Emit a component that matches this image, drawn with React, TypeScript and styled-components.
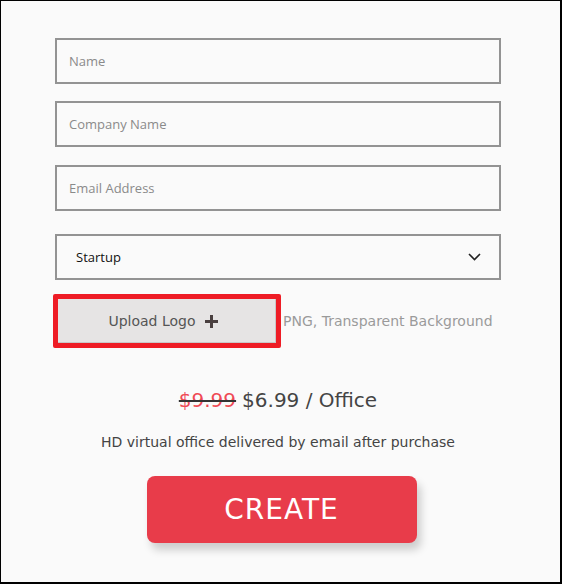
import React from "react";
import styled, { createGlobalStyle } from "styled-components";

const Global = createGlobalStyle`
  body {
    margin: 0;
    background: #fafafa;
    font-family: "Open Sans", "DejaVu Sans", sans-serif;
  }
`;

const Frame = styled.div`
  width: 562px;
  height: 584px;
  box-sizing: border-box;
  border-style: solid;
  border-color: #000;
  border-width: 1px 2px 2px 1px;
  background: #fafafa;
  padding: 37px 0 0 54px;
`;

const Form = styled.form`
  width: 446px;
  display: flex;
  flex-direction: column;
`;

const Field = styled.input<{ $gap?: number }>`
  box-sizing: border-box;
  width: 100%;
  height: 46px;
  margin-bottom: ${(p) => p.$gap ?? 18}px;
  border: 2px solid #939393;
  background: #fafafa;
  padding: 0 12px;
  font-family: "Open Sans", sans-serif;
  font-size: 13px;
  color: #333;
  outline: none;
  &::placeholder {
    color: #8a8a8a;
  }
`;

const SelectBox = styled.div`
  box-sizing: border-box;
  width: 100%;
  height: 46px;
  border: 2px solid #939393;
  background: #fafafa;
  display: flex;
  align-items: center;
  justify-content: space-between;
  padding: 0 18px 0 19px;
  font-family: "Open Sans", sans-serif;
  font-size: 13px;
  color: #111;
`;

const UploadRow = styled.div`
  display: flex;
  align-items: center;
  margin: 14px 0 0 -2px;
`;

const UploadFrame = styled.div`
  box-sizing: border-box;
  width: 228px;
  height: 54px;
  border: 5px solid #ee1c25;
  border-radius: 2px;
  display: flex;
`;

const UploadButton = styled.button`
  flex: 1;
  border: none;
  background: #e6e4e4;
  box-shadow: inset -1px -1px 0 #c9c7c7;
  display: flex;
  align-items: center;
  justify-content: center;
  gap: 9px;
  padding: 0 8px 0 0;
  font-family: "DejaVu Sans", sans-serif;
  font-size: 14px;
  color: #555;
`;

const Hint = styled.span`
  margin-left: 2px;
  font-family: "DejaVu Sans", sans-serif;
  font-size: 14px;
  color: #9a9a9a;
`;

const Price = styled.div`
  margin-top: 40px;
  text-align: center;
  font-family: "DejaVu Sans", sans-serif;
  font-size: 20px;
  color: #444;
`;

const OldPrice = styled.span`
  color: #ef4a55;
  text-decoration: line-through;
  text-decoration-color: #333;
  text-decoration-thickness: 2px;
  margin-right: 6px;
`;

const Note = styled.p`
  margin: 22px 0 0;
  text-align: center;
  font-family: "DejaVu Sans", sans-serif;
  font-size: 14px;
  color: #444;
`;

const CreateButton = styled.button`
  align-self: center;
  margin: 26px 0 0 7px;
  width: 270px;
  height: 67px;
  border: none;
  border-radius: 8px;
  background: #e83c4a;
  box-shadow: 4px 7px 8px rgba(0, 0, 0, 0.18);
  color: #fff;
  font-family: "DejaVu Sans", sans-serif;
  font-size: 28px;
  letter-spacing: 1px;
`;

const Chevron = () => (
  <svg width="13" height="8" viewBox="0 0 13 8">
    <path d="M1 1l5.5 5.5L12 1" fill="none" stroke="#222" strokeWidth="1.6" />
  </svg>
);

const Plus = () => (
  <svg width="13" height="13" viewBox="0 0 13 13">
    <path d="M6.5 0v13M0 6.5h13" stroke="#4a4040" strokeWidth="3" />
  </svg>
);

export default function App() {
  return (
    <>
      <Global />
      <Frame>
        <Form onSubmit={(e) => e.preventDefault()}>
          <Field placeholder="Name" $gap={17} />
          <Field placeholder="Company Name" />
          <Field placeholder="Email Address" $gap={23} />
          <SelectBox>
            <span>Startup</span>
            <Chevron />
          </SelectBox>
          <UploadRow>
            <UploadFrame>
              <UploadButton type="button">
                Upload Logo <Plus />
              </UploadButton>
            </UploadFrame>
            <Hint>PNG, Transparent Background</Hint>
          </UploadRow>
          <Price>
            <OldPrice>$9.99</OldPrice>$6.99 / Office
          </Price>
          <Note>HD virtual office delivered by email after purchase</Note>
          <CreateButton type="submit">CREATE</CreateButton>
        </Form>
      </Frame>
    </>
  );
}
